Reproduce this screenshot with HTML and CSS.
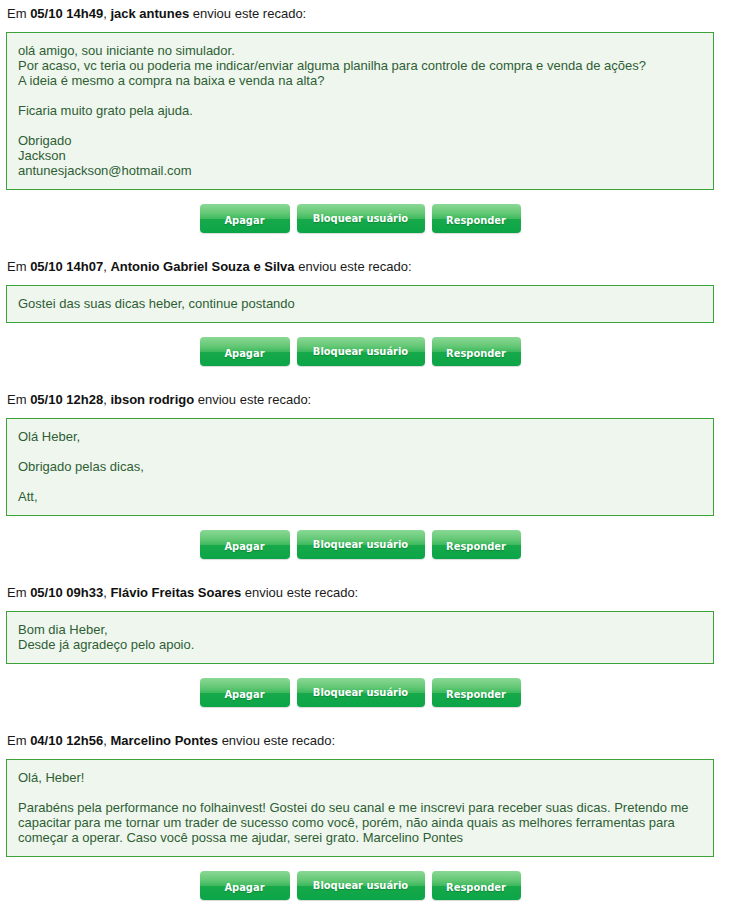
FILE: index.html
```html
<!DOCTYPE html>
<html lang="pt-BR">
<head>
<meta charset="utf-8">
<title>Recados</title>
<link rel="stylesheet" href="styles.css">
</head>
<body>
<div class="page">

  <div class="recado">
    <div class="cab">Em <b>05/10 14h49</b>, <b>jack antunes</b> enviou este recado:</div>
    <div class="msg">olá amigo, sou iniciante no simulador.<br>Por acaso, vc teria ou poderia me indicar/enviar alguma planilha para controle de compra e venda de ações?<br>A ideia é mesmo a compra na baixa e venda na alta?<br><br>Ficaria muito grato pela ajuda.<br><br>Obrigado<br>Jackson<br>antunesjackson@hotmail.com</div>
    <div class="acoes">
      <span class="btn btn-apagar">Apagar</span>
      <span class="btn btn-bloquear">Bloquear usuário</span>
      <span class="btn btn-responder">Responder</span>
    </div>
  </div>

  <div class="recado">
    <div class="cab">Em <b>05/10 14h07</b>, <b>Antonio Gabriel Souza e Silva</b> enviou este recado:</div>
    <div class="msg">Gostei das suas dicas heber, continue postando</div>
    <div class="acoes">
      <span class="btn btn-apagar">Apagar</span>
      <span class="btn btn-bloquear">Bloquear usuário</span>
      <span class="btn btn-responder">Responder</span>
    </div>
  </div>

  <div class="recado">
    <div class="cab">Em <b>05/10 12h28</b>, <b>ibson rodrigo</b> enviou este recado:</div>
    <div class="msg">Olá Heber,<br><br>Obrigado pelas dicas,<br><br>Att,</div>
    <div class="acoes">
      <span class="btn btn-apagar">Apagar</span>
      <span class="btn btn-bloquear">Bloquear usuário</span>
      <span class="btn btn-responder">Responder</span>
    </div>
  </div>

  <div class="recado">
    <div class="cab">Em <b>05/10 09h33</b>, <b>Flávio Freitas Soares</b> enviou este recado:</div>
    <div class="msg">Bom dia Heber,<br>Desde já agradeço pelo apoio.</div>
    <div class="acoes">
      <span class="btn btn-apagar">Apagar</span>
      <span class="btn btn-bloquear">Bloquear usuário</span>
      <span class="btn btn-responder">Responder</span>
    </div>
  </div>

  <div class="recado">
    <div class="cab">Em <b>04/10 12h56</b>, <b>Marcelino Pontes</b> enviou este recado:</div>
    <div class="msg">Olá, Heber!<br><br>Parabéns pela performance no folhainvest! Gostei do seu canal e me inscrevi para receber suas dicas. Pretendo me capacitar para me tornar um trader de sucesso como você, porém, não ainda quais as melhores ferramentas para começar a operar. Caso você possa me ajudar, serei grato. Marcelino Pontes</div>
    <div class="acoes">
      <span class="btn btn-apagar">Apagar</span>
      <span class="btn btn-bloquear">Bloquear usuário</span>
      <span class="btn btn-responder">Responder</span>
    </div>
  </div>

</div>
</body>
</html>
```

FILE: styles.css
```css
html, body {
  margin: 0;
  padding: 0;
  background: #ffffff;
}

body {
  font-family: "Liberation Sans", Arial, sans-serif;
  font-size: 13px;
  line-height: 15px;
  color: #111111;
}

.page {
  width: 708px;
  margin-left: 6px;
  padding-top: 6px;
}

.recado {
  margin-bottom: 26px;
}

.cab {
  padding-left: 1px;
  margin-bottom: 11px;
  color: #1a1a1a;
}

.cab b {
  color: #111111;
}

.msg {
  border: 1px solid #3ea23a;
  background: #eff6ee;
  color: #2e5e34;
  padding: 10px 12px 11px 11px;
}

.acoes {
  display: flex;
  justify-content: center;
  gap: 7px;
  margin-top: 14px;
}

.btn {
  box-sizing: border-box;
  height: 29px;
  display: flex;
  align-items: center;
  justify-content: center;
  border-radius: 4px;
  color: #ffffff;
  font-family: "DejaVu Sans Condensed", "DejaVu Sans", sans-serif;
  font-weight: bold;
  font-size: 11px;
  text-shadow: 0 1px 1px rgba(0, 80, 20, 0.35);
  background: linear-gradient(to bottom, #8ad894 0%, #66c977 30%, #3fba5f 50%, #17a94a 53%, #0ba548 100%);
  box-shadow: 0 1px 1px rgba(0, 0, 0, 0.15);
}

.btn-apagar {
  width: 90px;
  padding-top: 3px;
}

.btn-bloquear {
  width: 128px;
  padding-bottom: 1px;
}

.btn-responder {
  width: 89px;
  padding-top: 3px;
}
```
